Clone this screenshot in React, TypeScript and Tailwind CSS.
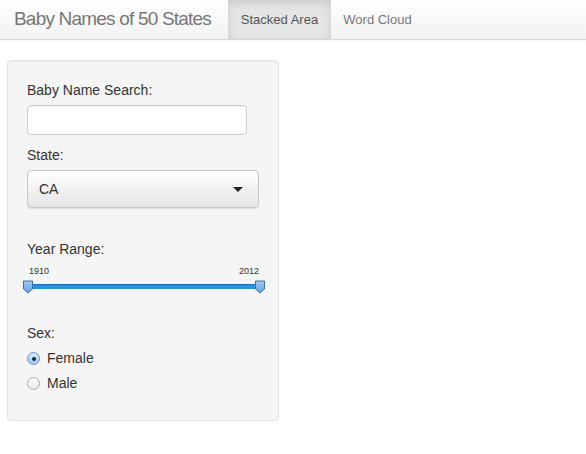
import React from 'react'

function Radio({ checked, label }: { checked?: boolean; label: string }) {
  return (
    <div className="flex items-center h-[25px]">
      <span
        className={`w-[13px] h-[13px] rounded-full border flex items-center justify-center ${
          checked
            ? 'border-[#6b8fc0] bg-gradient-to-b from-[#d9ecff] to-[#9cc7f2]'
            : 'border-[#a8a8a8] bg-gradient-to-b from-white to-[#e8e8e8]'
        }`}
      >
        {checked && <span className="w-[4px] h-[4px] rounded-full bg-[#1c2a3a]" />}
      </span>
      <span className="ml-[7px] text-[14px] text-[#333]">{label}</span>
    </div>
  )
}

function Handle() {
  return (
    <svg width="12" height="14" viewBox="0 0 12 14" className="block">
      <defs>
        <linearGradient id="hg" x1="0" y1="0" x2="0" y2="1">
          <stop offset="0" stopColor="#a9cdf3" />
          <stop offset="1" stopColor="#5e9be0" />
        </linearGradient>
      </defs>
      <path d="M1.5 1 H10.5 V9 L6 13 L1.5 9 Z" fill="url(#hg)" stroke="#3d6fb0" strokeWidth="1" />
    </svg>
  )
}

export default function App() {
  return (
    <div className="w-[586px] h-[454px] bg-white text-[#333] font-['Liberation_Sans',Arial,sans-serif] overflow-hidden">
      <nav className="h-[40px] bg-gradient-to-b from-white to-[#f2f2f2] border-b border-[#d4d4d4] flex items-stretch shadow-[0_1px_4px_rgba(0,0,0,0.06)]">
        <div className="pl-[14px] w-[228px] flex items-center text-[19px] text-[#777] tracking-[-0.8px]">
          Baby Names of 50 States
        </div>
        <div className="w-[103px] flex items-center justify-center bg-[#e5e5e5] text-[13px] text-[#555] shadow-[inset_0_3px_8px_rgba(0,0,0,0.12)]">
          Stacked Area
        </div>
        <div className="w-[93px] flex items-center justify-center text-[13px] text-[#777]">
          Word Cloud
        </div>
      </nav>

      <div className="pl-[7px] pt-[20px]">
        <div className="w-[272px] h-[361px] bg-[#f5f5f5] border border-[#e3e3e3] rounded-[4px] px-[19px] pt-[19px] shadow-[inset_0_1px_1px_rgba(0,0,0,0.05)]">
          <label className="block h-[20px] leading-[20px] text-[14px] mb-[5px]">Baby Name Search:</label>
          <div className="w-[220px] h-[30px] bg-white border border-[#ccc] rounded-[4px] shadow-[inset_0_1px_1px_rgba(0,0,0,0.075)]" />

          <label className="block h-[20px] leading-[20px] text-[14px] mt-[10px] mb-[5px]">State:</label>
          <div className="w-[232px] h-[38px] rounded-[4px] border border-[#c8c8c8] bg-gradient-to-b from-[#fefefe] to-[#e6e6e6] shadow-[0_1px_1px_rgba(0,0,0,0.1)] flex items-center justify-between pl-[11px] pr-[15px]">
            <span className="text-[14px] text-[#333]">CA</span>
            <span className="w-0 h-0 border-l-[5px] border-r-[5px] border-t-[5px] border-l-transparent border-r-transparent border-t-[#222]" />
          </div>

          <label className="block h-[20px] leading-[20px] text-[14px] mt-[31px]">Year Range:</label>
          <div className="w-[234px] mt-[6px]">
            <div className="flex justify-between text-[9px] leading-[12px] text-[#333] px-[2px]">
              <span>1910</span>
              <span>2012</span>
            </div>
            <div className="relative h-[16px] mt-[4px]">
              <div className="absolute left-[4px] right-[4px] top-[3px] h-[5px] bg-[#2a93dd] border-t border-[#1c6eb0]" />
              <div className="absolute left-[-5px] top-[-1px]">
                <Handle />
              </div>
              <div className="absolute right-[-5px] top-[-1px]">
                <Handle />
              </div>
            </div>
          </div>

          <label className="block h-[20px] leading-[20px] text-[14px] mt-[26px] mb-[3px]">Sex:</label>
          <Radio checked label="Female" />
          <Radio label="Male" />
        </div>
      </div>
    </div>
  )
}
